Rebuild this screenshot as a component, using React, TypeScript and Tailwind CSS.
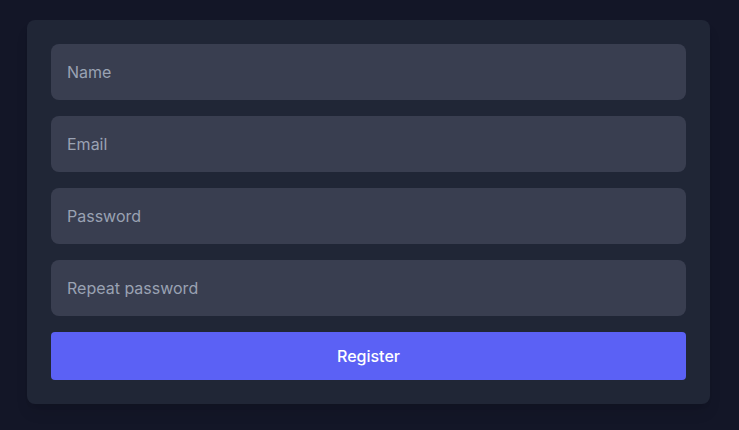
const fields = ["Name", "Email", "Password", "Repeat password"];

const App = () => {
    return (
        <div className="min-h-screen w-full bg-[#131627] pt-5 pl-[27px]" style={{ fontFamily: "Inter, sans-serif" }}>
            <form
                onSubmit={(e) => { e.preventDefault() }}
                className="w-[683px] bg-[#202636] rounded-lg p-6 flex flex-col gap-4 shadow-lg"
            >
                {fields.map((f) => (
                    <input
                        key={f}
                        type={f.toLowerCase().includes("password") ? "password" : "text"}
                        placeholder={f}
                        className="h-14 w-full px-4 rounded-lg bg-[#393e50] text-white text-base outline-none placeholder:text-[#9aa2b3]"
                    />
                ))}
                <button className="h-12 w-full rounded bg-[#5b61f5] text-white text-base font-medium">
                    Register
                </button>
            </form>
        </div>
    )
}
export default App;
